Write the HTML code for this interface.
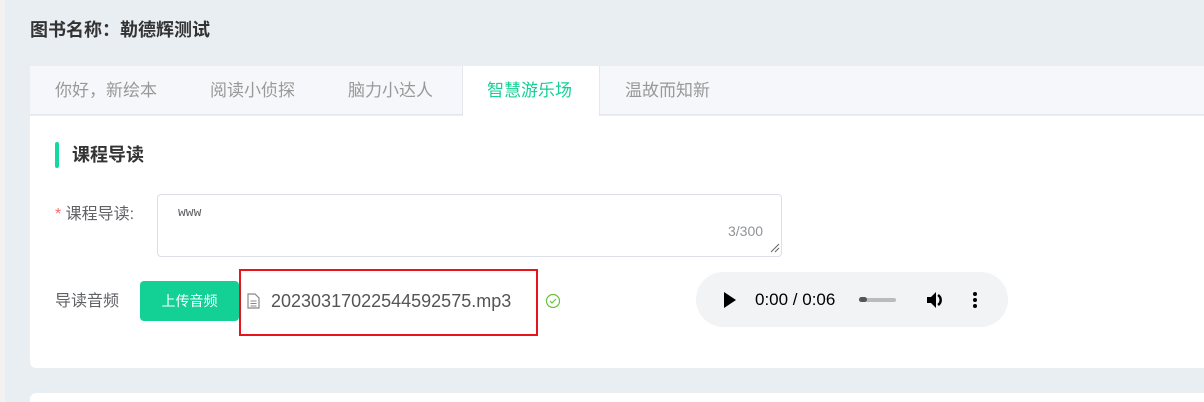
<!DOCTYPE html>
<html><head><meta charset="utf-8"><style>
*{margin:0;padding:0;box-sizing:border-box}
html,body{width:1204px;height:402px;overflow:hidden}
body{background:#e9eef2;font-family:"Liberation Sans","Noto Sans CJK SC",sans-serif;position:relative}
.a{position:absolute;white-space:nowrap}
</style></head><body>
<div class="a" style="left:0;top:0;width:5px;height:402px;background:#f2f2f2"></div>
<div class="a" style="left:30px;top:19px;font-size:18px;font-weight:bold;color:#333;line-height:22px">图书名称：勒德辉测试</div>
<div class="a" style="left:30px;top:66px;width:1180px;height:49px;background:#f5f7fa;border-bottom:1px solid #e4e7ed"></div>
<div class="a" style="left:462px;top:66px;width:138px;height:50px;background:#fff;border-left:1px solid #e4e7ed;border-right:1px solid #e4e7ed"></div>
<div class="a" style="left:55px;top:80px;font-size:17px;color:#999;line-height:22px">你好，新绘本</div>
<div class="a" style="left:210px;top:80px;font-size:17px;color:#999;line-height:22px">阅读小侦探</div>
<div class="a" style="left:348px;top:80px;font-size:17px;color:#999;line-height:22px">脑力小达人</div>
<div class="a" style="left:487px;top:80px;font-size:17px;color:#13d095;line-height:22px">智慧游乐场</div>
<div class="a" style="left:625px;top:80px;font-size:17px;color:#999;line-height:22px">温故而知新</div>
<div class="a" style="left:30px;top:116px;width:1180px;height:252px;background:#fff;border-radius:0 0 6px 6px"></div>
<div class="a" style="left:30px;top:393px;width:1180px;height:9px;background:#fff;border-radius:6px 6px 0 0"></div>
<div class="a" style="left:55px;top:142px;width:4px;height:26px;background:#13d9a0;border-radius:2px"></div>
<div class="a" style="left:72px;top:144px;font-size:18px;font-weight:bold;color:#333;line-height:22px">课程导读</div>
<div class="a" style="left:55px;top:205px;font-size:16px;color:#606266;line-height:20px"><span style="color:#f56c6c">*</span> 课程导读:</div>
<div class="a" style="left:157px;top:194px;width:625px;height:63px;border:1px solid #dcdfe6;border-radius:4px"></div>
<div class="a" style="left:178px;top:205px;font-size:13px;color:#606266;font-family:'Liberation Mono',monospace">www</div>
<div class="a" style="left:728px;top:223px;font-size:14px;color:#909399">3/300</div>
<svg class="a" style="left:770px;top:243px" width="10" height="10"><path d="M1 9L9 1M5 9L9 5" stroke="#666" stroke-width="1"/></svg>
<div class="a" style="left:55px;top:292px;font-size:16px;color:#606266;line-height:20px">导读音频</div>
<div class="a" style="left:140px;top:281px;width:99px;height:40px;background:#13d095;border-radius:4px;color:#fff;font-size:14px;line-height:40px;text-align:center">上传音频</div>
<div class="a" style="left:239px;top:269px;width:299px;height:67px;border:2px solid #e8141c"></div>
<svg class="a" style="left:247px;top:293px" width="13" height="16" viewBox="0 0 13 16"><path d="M1 1H8L12 5V15H1Z" fill="none" stroke="#888" stroke-width="1.2"/><path d="M3.5 8H9.5M3.5 10.5H9.5M3.5 13H9.5" stroke="#888"/></svg>
<div class="a" style="left:271px;top:290px;font-size:18px;color:#555;line-height:22px">20230317022544592575.mp3</div>
<svg class="a" style="left:545px;top:293px" width="16" height="16"><circle cx="8" cy="8" r="6.5" fill="none" stroke="#67c23a" stroke-width="1.2"/><path d="M5 8L7 10L11 6" fill="none" stroke="#67c23a" stroke-width="1.2"/></svg>
<div class="a" style="left:696px;top:272px;width:312px;height:55px;background:#f1f3f4;border-radius:28px"></div>
<svg class="a" style="left:723px;top:292px" width="14" height="16"><path d="M1 0L13 8L1 16Z" fill="#000"/></svg>
<div class="a" style="left:755px;top:290px;font-size:17px;color:#000;line-height:20px">0:00 / 0:06</div>
<div class="a" style="left:859px;top:298px;width:37px;height:4px;background:#bbb;border-radius:2px"></div>
<div class="a" style="left:859px;top:297px;width:8px;height:5px;background:#555;border-radius:3px"></div>
<svg class="a" style="left:926px;top:290px" width="22" height="20"><path d="M1 7H5L10 2V18L5 13H1Z" fill="#000"/><path d="M12 5A6 6 0 0 1 12 15" fill="none" stroke="#000" stroke-width="2.5"/></svg>
<svg class="a" style="left:972px;top:291px" width="6" height="18"><circle cx="3" cy="3" r="2" fill="#000"/><circle cx="3" cy="9" r="2" fill="#000"/><circle cx="3" cy="15" r="2" fill="#000"/></svg>
</body></html>
